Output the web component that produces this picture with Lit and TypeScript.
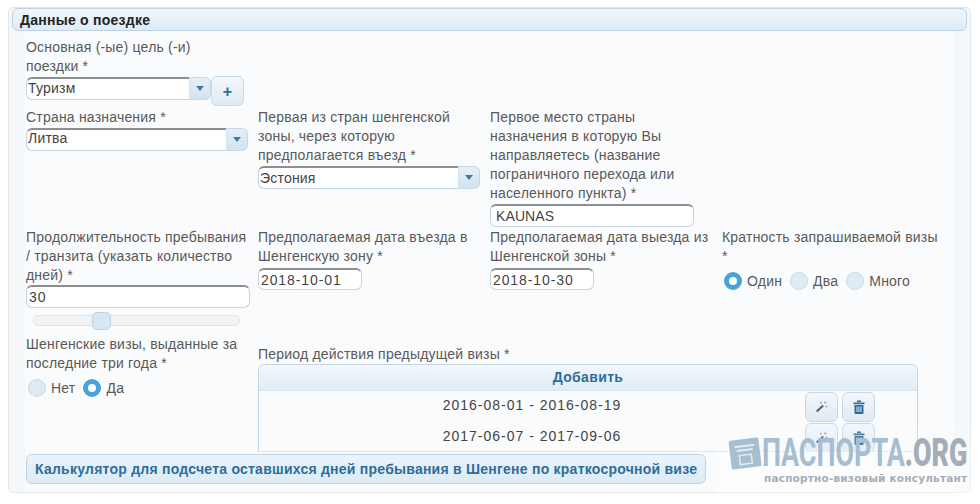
import { LitElement, html, css } from "lit";
import { customElement } from "lit/decorators.js";

const arrow = html`<svg class="arr" viewBox="0 0 8 5" width="8" height="5"><path d="M0 0H8L4 5Z" fill="#3d7ba6"/></svg>`;
const wand = html`<svg viewBox="0 0 14 14" width="13" height="13"><path d="M1 11.5L8 5l1.6 1.6L2.6 13.2Z" fill="#56697a"/><path d="M11 1.5v2.4M9.8 2.7h2.4M12.4 6v2M11.4 7h2M6.5 2v2M5.5 3h2" stroke="#8ca0b0" stroke-width="1"/></svg>`;
const trash = html`<svg viewBox="0 0 12 14" width="12" height="14"><path d="M4 1.2h4M0.5 3.4h11" stroke="#2f6d98" stroke-width="1.6" fill="none"/><path d="M1.5 5h9v8a1 1 0 0 1-1 1h-7a1 1 0 0 1-1-1Z" fill="#2f6d98"/><path d="M4 6.5v5.5M6 6.5v5.5M8 6.5v5.5" stroke="#dceaf4" stroke-width="1"/></svg>`;

@customElement("app-root")
export class AppRoot extends LitElement {
  static styles = css`
    :host { display: block; width: 980px; height: 504px; overflow: hidden; background: #fff; position: relative; font-family: "Liberation Sans", Arial, sans-serif; font-size: 14px; line-height: 19px; color: #595959; letter-spacing: .2px; }
    .panel { margin: 7px 9px 0 8px; height: 486px; box-sizing: border-box; background: #f5f8fa; border: 1px solid #e3e7ea; border-radius: 5px; display: flex; flex-direction: column; }
    .head { margin: 0 3px 0 3px; height: 23px; line-height: 23px; padding-left: 7px; box-sizing: border-box; font-weight: bold; color: #222; letter-spacing: .25px; background: linear-gradient(#eef6fb, #dfecf6); border: 1px solid #bdd3e4; border-radius: 6px; }
    .body { margin-left: 16px; margin-right: 16px; background: #fafbfc; flex: 1; padding: 7px 0 0 1px; display: flex; flex-direction: column; }
    .grid { display: grid; grid-template-columns: repeat(4, 232px); }
    .r1 { height: 70px; }
    .r2 { height: 120px; }
    .r3 { height: 107px; }
    .r4 { height: 119px; }
    .field { display: flex; align-items: flex-start; margin-top: 1px; }
    .combo { display: flex; width: 222px; height: 23px; box-sizing: border-box; }
    .combo.short { width: 185px; }
    .combo.low { margin-top: 1px; }
    .combo.low .val { line-height: 16px; }
    .combo.c2 { margin-top: 1px; }
    .combo.c2 .val { line-height: 20px; }
    .combo .val { flex: 1; box-sizing: border-box; background: #fff; border: 1px solid #c4d3de; border-top: 2px solid #8b8f93; border-right: none; border-radius: 6px 0 0 6px; line-height: 18px; padding-left: 1px; color: #444; }
    .combo .btn { width: 22px; background: linear-gradient(#e4eff7, #d3e3ef); border: 1px solid #c6d9e8; border-left: 1px solid #d5e3ee; border-radius: 0 6px 6px 0; display: flex; align-items: center; justify-content: center; box-sizing: border-box; }
    .arr { display: block; }
    .plus { width: 33px; height: 30px; margin-top: -1px; box-sizing: border-box; background: linear-gradient(#f2f7fb, #dfeaf3); border: 1px solid #c6d9e8; border-radius: 6px; color: #2f6d98; font-weight: bold; font-size: 16px; text-align: center; line-height: 30px; }
    .input { box-sizing: border-box; background: #fff; border: 1px solid #c8d2d9; border-top: 2px solid #8b8f93; border-radius: 6px; height: 23px; line-height: 20px; padding-left: 2px; color: #444; letter-spacing: .9px; }
    .kaunas { width: 204px; margin-top: 1px; padding-left: 5px; letter-spacing: .1px; }
    .wide { width: 224px; }
    .date { width: 104px; margin-top: 2px; height: 22px; }
    .slider { margin: 7px 0 0 7px; width: 207px; height: 11px; box-sizing: border-box; position: relative; background: #f1f3f4; border: 1px solid #dfe4e8; border-radius: 5px; }
    .thumb { position: absolute; left: 58px; top: -4px; width: 19px; height: 18px; box-sizing: border-box; background: #d6e6f2; border: 1px solid #bdd3e4; border-radius: 5px; }
    .radios { display: flex; align-items: center; height: 22px; margin-top: 4px; }
    .radio { width: 18px; height: 18px; box-sizing: border-box; border-radius: 50%; background: #dfebf4; border: 1px solid #c6d9e8; margin: 0 5px 0 2px; flex: none; }
    .radio.on { background: #fff; border: 5px solid #48a3da; }
    .radios span { margin-right: 6px; }
    .wide3 { grid-column: span 3; }
    .lab2 { margin-top: 10px; }
    .tablewrap { width: 660px; height: 88px; box-sizing: border-box; overflow: hidden; border: 1px solid #c5d6e3; border-bottom: 1px solid #dde4ea; border-radius: 6px 6px 0 0; }
    .thead { height: 25px; line-height: 25px; text-align: center; font-weight: bold; color: #2f6d98; letter-spacing: .35px; background: linear-gradient(#f2f8fd, #dfecf6); border-bottom: 1px solid #dbe6ee; }
    .row { display: flex; height: 31px; align-items: center; }
    .row + .row { position: relative; z-index: 2; }
    .cell { width: 546px; text-align: center; letter-spacing: 1px; color: #444; padding-bottom: 2px; }
    .ib { width: 33px; height: 30px; box-sizing: border-box; background: linear-gradient(#f2f7fb, #dfeaf3); border: 1px solid #c6d9e8; border-radius: 6px; margin-right: 4px; display: flex; align-items: center; justify-content: center; flex: none; }
    .calc { width: 680px; height: 30px; box-sizing: border-box; background: linear-gradient(#e9f3fa, #dcebf5); border: 1px solid #bdd3e4; border-radius: 6px; color: #2f6d98; font-weight: bold; line-height: 28px; padding-left: 8px; letter-spacing: .24px; white-space: nowrap; }
    .mark { position: absolute; left: 715px; top: 424px; width: 256px; height: 70px; background: linear-gradient(rgba(255,255,255,.1), rgba(255,255,255,.1) 22px, rgba(255,255,255,.4) 30px); pointer-events: none; z-index: 3; }
    .logo { position: absolute; left: 13px; top: 12px; }
    .big { position: absolute; left: 47px; top: 12px; font: bold 39px/34px "Roboto", "Liberation Sans", sans-serif; letter-spacing: 0; color: #a6bed0; transform-origin: left top; transform: scaleX(.69); white-space: nowrap; }
    .big b { color: #a3aeb8; }
    .small { position: absolute; left: 49px; top: 46px; font: bold 10.5px/16px "DejaVu Sans", sans-serif; letter-spacing: .2px; color: #a3aeb8; white-space: nowrap; }
  `;

  render() {
    return html`
      <div class="panel">
        <div class="head">Данные о поездке</div>
        <div class="body">
          <div class="grid r1">
            <div>
              <div>Основная (-ые) цель (-и)<br>поездки *</div>
              <div class="field">
                <div class="combo short"><div class="val">Туризм</div><div class="btn">${arrow}</div></div>
                <div class="plus">+</div>
              </div>
            </div>
          </div>
          <div class="grid r2">
            <div>
              <div>Страна назначения *</div>
              <div class="combo low"><div class="val">Литва</div><div class="btn">${arrow}</div></div>
            </div>
            <div>
              <div>Первая из стран шенгенской<br>зоны, через которую<br>предполагается въезд *</div>
              <div class="combo c2"><div class="val">Эстония</div><div class="btn">${arrow}</div></div>
            </div>
            <div>
              <div>Первое место страны<br>назначения в которую Вы<br>направляетесь (название<br>пограничного перехода или<br>населенного пункта) *</div>
              <div class="input kaunas">KAUNAS</div>
            </div>
          </div>
          <div class="grid r3">
            <div>
              <div>Продолжительность пребывания<br>/ транзита (указать количество<br>дней) *</div>
              <div class="input wide">30</div>
              <div class="slider"><div class="thumb"></div></div>
            </div>
            <div>
              <div>Предполагаемая дата въезда в<br>Шенгенскую зону *</div>
              <div class="input date">2018-10-01</div>
            </div>
            <div>
              <div>Предполагаемая дата выезда из<br>Шенгенской зоны *</div>
              <div class="input date">2018-10-30</div>
            </div>
            <div>
              <div>Кратность запрашиваемой визы<br>*</div>
              <div class="radios"><div class="radio on"></div><span>Один</span><div class="radio"></div><span>Два</span><div class="radio"></div><span>Много</span></div>
            </div>
          </div>
          <div class="grid r4">
            <div>
              <div>Шенгенские визы, выданные за<br>последние три года *</div>
              <div class="radios"><div class="radio"></div><span>Нет</span><div class="radio on"></div><span>Да</span></div>
            </div>
            <div class="wide3">
              <div class="lab2">Период действия предыдущей визы *</div>
              <div class="tablewrap">
                <div class="thead">Добавить</div>
                <div class="row"><div class="cell">2016-08-01 - 2016-08-19</div><div class="ib">${wand}</div><div class="ib">${trash}</div></div>
                <div class="row"><div class="cell">2017-06-07 - 2017-09-06</div><div class="ib">${wand}</div><div class="ib">${trash}</div></div>
              </div>
            </div>
          </div>
          <div class="calc">Калькулятор для подсчета оставшихся дней пребывания в Шенгене по краткосрочной визе</div>
        </div>
      </div>
      <div class="mark">
        <svg class="logo" viewBox="0 0 34 34" width="34" height="34"><g transform="rotate(-7 17 17)"><rect x="2" y="3" width="30" height="29" rx="2" fill="#a6bed0"/><path d="M7 10h20M9 14h16" stroke="#e6edf2" stroke-width="2"/><rect x="11" y="19" width="12" height="9" fill="none" stroke="#e6edf2" stroke-width="1.5"/></g></svg>
        <div class="big">ПАСПОРТА<b>.ORG</b></div>
        <div class="small">паспортно-визовый консультант</div>
      </div>
    `;
  }
}
